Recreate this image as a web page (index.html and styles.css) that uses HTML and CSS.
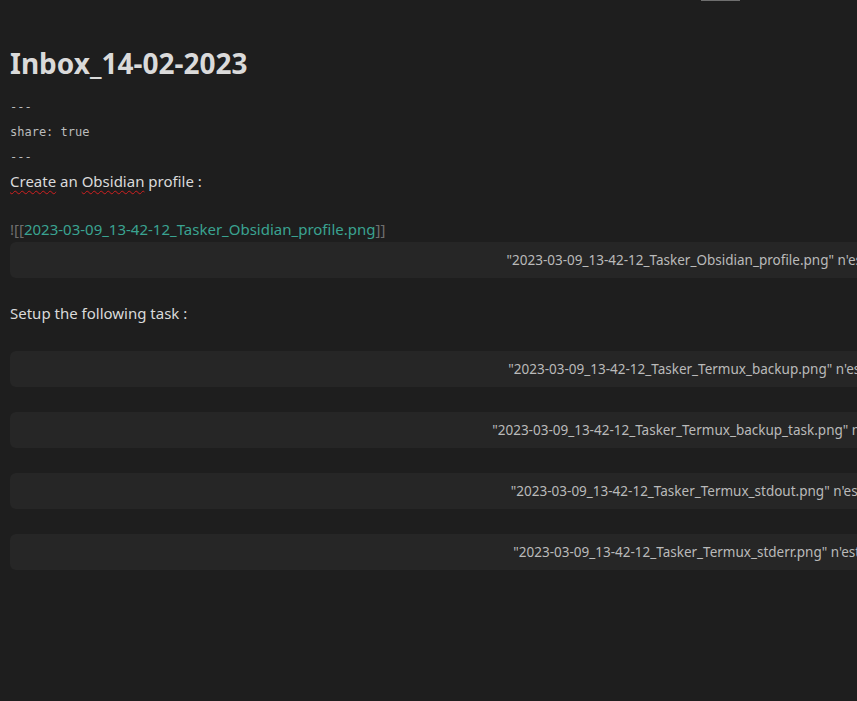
FILE: index.html
```html
<!DOCTYPE html>
<html lang="fr">
<head>
<meta charset="utf-8">
<title>Inbox_14-02-2023</title>
<link rel="stylesheet" href="styles.css">
</head>
<body>
<div class="scroll-mark"></div>
<main class="note">
  <h1 class="title">Inbox_14-02-2023</h1>
  <div class="frontmatter">
    <div class="fm-line">---</div>
    <div class="fm-line">share: true</div>
    <div class="fm-line">---</div>
  </div>
  <p class="line create"><span class="typo">Create</span> an <span class="typo">Obsidian</span> profile :</p>
  <p class="line link-line"><span class="bracket">![[</span><span class="link">2023-03-09_13-42-12_Tasker_Obsidian_profile.png</span><span class="bracket">]]</span></p>
  <div class="embed first"><span class="embed-text">"2023-03-09_13-42-12_Tasker_Obsidian_profile.png" n'est pas encore créé. Cliquez pour le créer.</span></div>
  <p class="line setup">Setup the following task :</p>
  <div class="embed"><span class="embed-text">"2023-03-09_13-42-12_Tasker_Termux_backup.png" n'est pas encore créé. Cliquez pour le créer.</span></div>
  <div class="embed"><span class="embed-text">"2023-03-09_13-42-12_Tasker_Termux_backup_task.png" n'est pas encore créé. Cliquez pour le créer.</span></div>
  <div class="embed"><span class="embed-text">"2023-03-09_13-42-12_Tasker_Termux_stdout.png" n'est pas encore créé. Cliquez pour le créer.</span></div>
  <div class="embed"><span class="embed-text">"2023-03-09_13-42-12_Tasker_Termux_stderr.png" n'est pas encore créé. Cliquez pour le créer.</span></div>
</main>
</body>
</html>
```

FILE: styles.css
```css
html, body {
  margin: 0;
  padding: 0;
  background: #1e1e1e;
  overflow: hidden;
  height: 100%;
}

body {
  font-family: "Noto Sans", "Open Sans", sans-serif;
  color: #dadada;
  position: relative;
}

.scroll-mark {
  position: absolute;
  left: 701px;
  top: 0;
  width: 39px;
  height: 1px;
  background: #6e6e6e;
}

.note {
  padding: 45px 0 0 10px;
  width: 1596px;
}

.title {
  margin: 0;
  font-size: 28px;
  line-height: 36px;
  font-weight: 700;
  color: #dadada;
}

.frontmatter {
  margin-top: 14px;
  font-family: "DejaVu Sans Mono", "Liberation Mono", monospace;
  font-size: 12px;
  color: #bcbcbc;
}

.fm-line {
  line-height: 25px;
  height: 25px;
}

.line {
  margin: 0;
  font-size: 15px;
  line-height: 26px;
}

.create {
  margin-top: -2px;
}

.link-line {
  margin-top: 22px;
}

.bracket {
  color: #6f6f6f;
}

.link {
  color: #3aa391;
}

.typo {
  text-decoration: underline wavy #d02020;
  text-decoration-thickness: 1px;
  text-underline-offset: 3px;
}

.embed {
  height: 36px;
  margin-top: 25px;
  background: #262626;
  border-radius: 6px;
  display: flex;
  align-items: center;
  justify-content: center;
  font-size: 13.5px;
  color: #bababa;
  white-space: nowrap;
}

.embed.first {
  margin-top: 0;
}

.setup {
  margin-top: 22px;
}
```
